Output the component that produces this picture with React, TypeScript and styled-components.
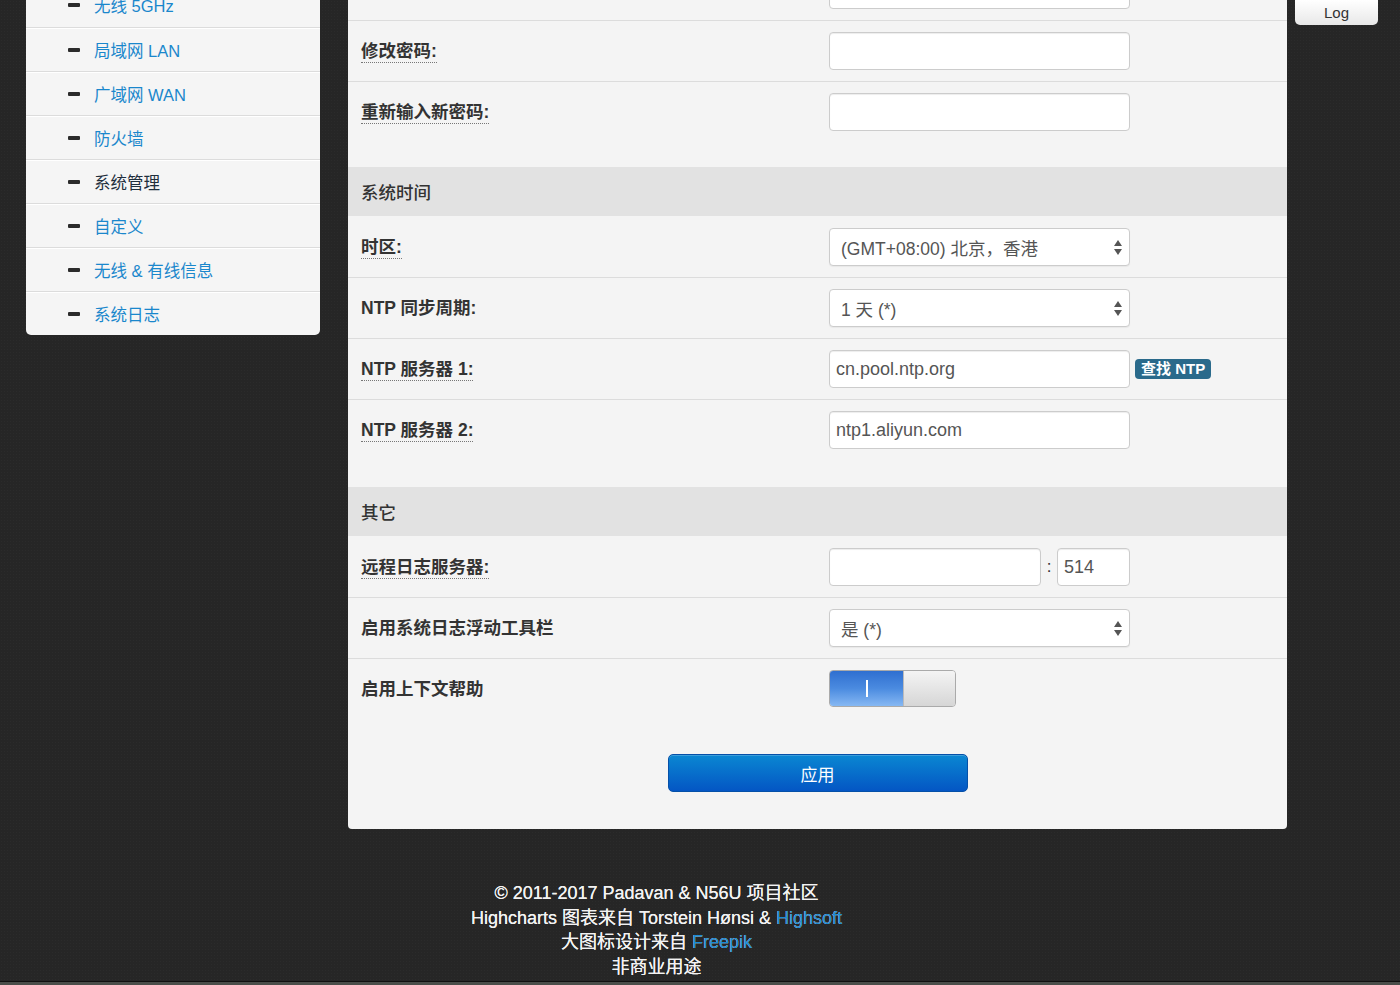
import * as React from 'react';
import styled, { createGlobalStyle } from 'styled-components';

const font = `"Liberation Sans", "Noto Sans CJK SC", sans-serif`;

const GlobalStyle = createGlobalStyle`
    html, body {
        margin: 0;
        padding: 0;
        background: #262626;
        font-family: ${font};
        overflow: hidden;
    }
`;

const menu = [
    { title: '无线 5GHz' },
    { title: '局域网 LAN' },
    { title: '广域网 WAN' },
    { title: '防火墙' },
    { title: '系统管理', active: true },
    { title: '自定义' },
    { title: '无线 & 有线信息' },
    { title: '系统日志' },
];

const ArrowsIcon = () => (
    <svg width="8" height="15" viewBox="0 0 8 15">
        <path d="M4 0 L8 6 L0 6 Z" fill="#555" />
        <path d="M4 15 L8 9 L0 9 Z" fill="#555" />
    </svg>
);

export default function App() {
    return (
        <>
            <GlobalStyle />
            <Page>
                <Layout>
                    <Sidebar>
                        {menu.map((m) => (
                            <MenuItem key={m.title} active={m.active}>
                                <Dash />
                                {m.title}
                            </MenuItem>
                        ))}
                    </Sidebar>
                    <Panel>
                        <Table gap={25}>
                            <Row>
                                <Label />
                                <Field><TextInput /></Field>
                            </Row>
                            <Row>
                                <Label hint>修改密码:</Label>
                                <Field><TextInput /></Field>
                            </Row>
                            <Row>
                                <Label hint>重新输入新密码:</Label>
                                <Field><TextInput /></Field>
                            </Row>
                        </Table>

                        <SectionHeader>系统时间</SectionHeader>
                        <Table gap={27}>
                            <Row>
                                <Label hint>时区:</Label>
                                <Field>
                                    <Select>
                                        (GMT+08:00) 北京，香港
                                        <ArrowsIcon />
                                    </Select>
                                </Field>
                            </Row>
                            <Row>
                                <Label>NTP 同步周期:</Label>
                                <Field>
                                    <Select>
                                        1 天 (*)
                                        <ArrowsIcon />
                                    </Select>
                                </Field>
                            </Row>
                            <Row>
                                <Label hint>NTP 服务器 1:</Label>
                                <Field>
                                    <TextInput>cn.pool.ntp.org</TextInput>
                                    <Badge>查找 NTP</Badge>
                                </Field>
                            </Row>
                            <Row>
                                <Label hint>NTP 服务器 2:</Label>
                                <Field><TextInput>ntp1.aliyun.com</TextInput></Field>
                            </Row>
                        </Table>

                        <SectionHeader>其它</SectionHeader>
                        <Table gap={0}>
                            <Row>
                                <Label hint>远程日志服务器:</Label>
                                <Field>
                                    <TextInput width={212} />
                                    <Colon>:</Colon>
                                    <TextInput width={73}>514</TextInput>
                                </Field>
                            </Row>
                            <Row>
                                <Label>启用系统日志浮动工具栏</Label>
                                <Field>
                                    <Select>
                                        是 (*)
                                        <ArrowsIcon />
                                    </Select>
                                </Field>
                            </Row>
                            <Row>
                                <Label>启用上下文帮助</Label>
                                <Field>
                                    <Toggle>
                                        <ToggleOn><ToggleMark /></ToggleOn>
                                        <ToggleKnob />
                                    </Toggle>
                                </Field>
                            </Row>
                        </Table>

                        <Actions>
                            <ApplyButton>应用</ApplyButton>
                        </Actions>
                    </Panel>
                </Layout>

                <Footer>
                    <div>© 2011-2017 Padavan &amp; N56U 项目社区</div>
                    <div>Highcharts 图表来自 Torstein Hønsi &amp; <Link>Highsoft</Link></div>
                    <div>大图标设计来自 <Link>Freepik</Link></div>
                    <div>非商业用途</div>
                </Footer>
                <BottomBar />
            </Page>
            <LogButton>Log</LogButton>
        </>
    );
}

const Page = styled.div`
    display: flex;
    flex-direction: column;
    height: 985px;
    background-color: #262626;
    background-image: radial-gradient(rgba(255,255,255,0.025) 1px, transparent 1px);
    background-size: 3px 3px;
`;

const Layout = styled.div`
    display: flex;
    align-items: flex-start;
    gap: 28px;
    width: 1261px;
    margin-left: 26px;
`;

const Sidebar = styled.nav`
    width: 294px;
    margin-top: -17px;
    background: #f5f5f5;
    border-radius: 0 0 5px 5px;
    overflow: hidden;
`;

const MenuItem = styled.div<{ active?: boolean }>`
    display: flex;
    align-items: center;
    height: 43px;
    padding-left: 42px;
    border-top: 1px solid #dcdcdc;
    box-shadow: inset 0 1px 0 #fff;
    font-size: 16.5px;
    color: ${(p) => (p.active ? '#1f2f3d' : '#1a87cc')};
    &:first-child {
        border-top: none;
        height: 44px;
    }
`;

const Dash = styled.span`
    width: 12px;
    height: 4px;
    margin-right: 14px;
    border-radius: 1px;
    background: #2b2b2b;
`;

const Panel = styled.main`
    width: 939px;
    margin-top: -41px;
    background: #f4f4f4;
    border-radius: 0 0 4px 4px;
`;

const Table = styled.div<{ gap: number }>`
    margin-bottom: ${(p) => p.gap}px;
`;

const Row = styled.div`
    display: grid;
    grid-template-columns: 468px 1fr;
    align-items: center;
    padding: 11px 0 11px 13px;
    border-top: 1px solid #dcdcdc;
    &:first-child {
        border-top-color: transparent;
    }
`;

const Label = styled.span<{ hint?: boolean }>`
    justify-self: start;
    margin-top: 2px;
    font-size: 17.5px;
    font-weight: bold;
    color: #333;
    line-height: 21px;
    border-bottom: ${(p) => (p.hint ? '1px dotted #777' : '1px solid transparent')};
`;

const Field = styled.div`
    display: flex;
    align-items: center;
    height: 38px;
`;

const TextInput = styled.div<{ width?: number }>`
    box-sizing: border-box;
    display: flex;
    align-items: center;
    width: ${(p) => p.width ?? 301}px;
    height: 38px;
    padding-left: 6px;
    background: #fff;
    border: 1px solid #ccc;
    border-radius: 4px;
    box-shadow: inset 0 1px 1px rgba(0,0,0,0.075);
    font-size: 18px;
    color: #555;
`;

const Select = styled(TextInput)`
    justify-content: space-between;
    padding: 0 7px 0 11px;
    font-size: 17.5px;
    box-shadow: 0 1px 1px rgba(0,0,0,0.05);
`;

const Badge = styled.span`
    margin-left: 5px;
    margin-top: -1px;
    padding: 2px 6px;
    font-size: 15px;
    font-weight: bold;
    line-height: 16px;
    color: #fff;
    background: #2a6a8b;
    border-radius: 4px;
`;

const Colon = styled.span`
    width: 16px;
    text-align: center;
    font-size: 17px;
    color: #333;
`;

const Toggle = styled.div`
    display: flex;
    align-self: flex-start;
    width: 127px;
    height: 37px;
    box-sizing: border-box;
    border: 1px solid #aaa;
    border-radius: 4px;
    overflow: hidden;
`;

const ToggleOn = styled.div`
    display: flex;
    align-items: center;
    justify-content: center;
    width: 73px;
    background: linear-gradient(#2f6fd0, #4b8be0 50%, #86b8f3);
`;

const ToggleMark = styled.span`
    width: 2px;
    height: 17px;
    background: #fff;
`;

const ToggleKnob = styled.div`
    flex: 1;
    border-left: 1px solid #bbb;
    background: linear-gradient(#f4f4f4, #e2e2e2 60%, #d6d6d6);
`;

const SectionHeader = styled.div`
    display: flex;
    align-items: center;
    height: 49px;
    padding-left: 13px;
    background: #e2e2e2;
    font-size: 17.5px;
    font-weight: 500;
    color: #333;
`;

const Actions = styled.div`
    display: flex;
    justify-content: center;
    padding: 35px 0 37px;
`;

const ApplyButton = styled.button`
    width: 300px;
    height: 38px;
    border: 1px solid #0550a8;
    border-radius: 5px;
    background: linear-gradient(#0a87d2, #0456c4);
    color: #fff;
    font-family: ${font};
    font-size: 17px;
    box-shadow: inset 0 1px 0 rgba(255,255,255,0.2);
`;

const Footer = styled.footer`
    width: 1261px;
    margin: 52px 0 0 26px;
    text-align: center;
    font-size: 18px;
    line-height: 24.7px;
    color: #f2f2f2;
    text-shadow: 0 0 0.4px #fff;
`;

const Link = styled.span`
    color: #1a8ad4;
`;

const BottomBar = styled.div`
    margin-top: auto;
    height: 3px;
    border-top: 1px solid #111;
    background: #4b4e4a;
`;

const LogButton = styled.div`
    position: fixed;
    top: 0;
    left: 1295px;
    width: 83px;
    height: 25px;
    display: flex;
    align-items: center;
    justify-content: center;
    background: linear-gradient(#ffffff, #e8e8e8);
    border-radius: 0 0 5px 5px;
    font-size: 15px;
    color: #333;
`;
